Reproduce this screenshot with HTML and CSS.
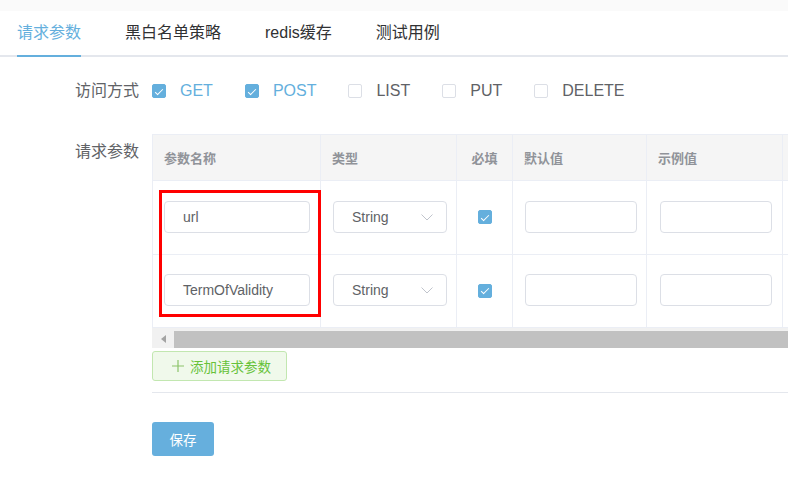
FILE: index.html
```html
<!DOCTYPE html>
<html lang="zh-CN">
<head>
<meta charset="utf-8">
<title>请求参数</title>
<link rel="stylesheet" href="styles.css">
</head>
<body>
<div class="topbar"></div>
<div class="tabs">
  <div class="tab active">请求参数</div>
  <div class="tab">黑白名单策略</div>
  <div class="tab">redis缓存</div>
  <div class="tab">测试用例</div>
</div>

<div class="form">
  <div class="form-row methods-row">
    <div class="label">访问方式</div>
    <div class="content checks">
      <label class="check on"><span class="box"></span><span class="txt">GET</span></label>
      <label class="check on"><span class="box"></span><span class="txt">POST</span></label>
      <label class="check"><span class="box"></span><span class="txt">LIST</span></label>
      <label class="check"><span class="box"></span><span class="txt">PUT</span></label>
      <label class="check"><span class="box"></span><span class="txt">DELETE</span></label>
    </div>
  </div>

  <div class="form-row params-row">
    <div class="label label-top">请求参数</div>
    <div class="content params">
      <div class="table">
        <div class="trow thead">
          <div class="cell c1">参数名称</div>
          <div class="cell c2">类型</div>
          <div class="cell c3 center">必填</div>
          <div class="cell c4">默认值</div>
          <div class="cell c5">示例值</div>
          <div class="cell c6"></div>
        </div>
        <div class="trow tbody r1">
          <div class="cell c1"><div class="input w146">url</div></div>
          <div class="cell c2"><div class="select">String<svg class="chev" width="12" height="7" viewBox="0 0 12 7"><path d="M0.5 0.5 L6 6 L11.5 0.5" fill="none" stroke="#c0c4cc" stroke-width="1"/></svg></div></div>
          <div class="cell c3 center"><span class="box on-box"></span></div>
          <div class="cell c4"><div class="input w111"></div></div>
          <div class="cell c5"><div class="input w111"></div></div>
          <div class="cell c6"></div>
        </div>
        <div class="trow tbody r2">
          <div class="cell c1"><div class="input w146">TermOfValidity</div></div>
          <div class="cell c2"><div class="select">String<svg class="chev" width="12" height="7" viewBox="0 0 12 7"><path d="M0.5 0.5 L6 6 L11.5 0.5" fill="none" stroke="#c0c4cc" stroke-width="1"/></svg></div></div>
          <div class="cell c3 center"><span class="box on-box"></span></div>
          <div class="cell c4"><div class="input w111"></div></div>
          <div class="cell c5"><div class="input w111"></div></div>
          <div class="cell c6"></div>
        </div>
        <div class="scrollbar">
          <div class="arrow"><svg width="6" height="8" viewBox="0 0 6 8"><path d="M5 0 L0 4 L5 8 Z" fill="#a3a3a3"/></svg></div>
          <div class="thumb"></div>
        </div>
        <div class="highlight"></div>
      </div>
      <div class="add-btn"><svg width="12" height="12" viewBox="0 0 12 12"><path d="M6 0 V12 M0 6 H12" stroke="#8cc46a" stroke-width="1.2"/></svg><span>添加请求参数</span></div>
      <div class="divider"></div>
      <div class="save-btn">保存</div>
    </div>
  </div>
</div>
</body>
</html>
```

FILE: styles.css
```css
* { box-sizing: border-box; }
html, body { margin: 0; padding: 0; background: #fff; }
body {
  font-family: "Liberation Sans", "Noto Sans CJK SC", sans-serif;
  color: #303133;
  width: 788px;
  overflow: hidden;
}
.topbar { height: 11px; background: #fafafa; }
.tabs {
  display: flex;
  gap: 44px;
  padding-left: 17px;
  height: 46px;
  border-bottom: 2px solid #e4e7ed;
}
.tab {
  font-size: 16px;
  line-height: 44px;
  height: 46px;
  color: #303133;
  border-bottom: 2px solid transparent;
}
.tab.active { color: #64afdd; border-bottom-color: #64afdd; }

.form { padding-top: 14px; }
.form-row { display: flex; }
.label {
  width: 139px;
  text-align: right;
  font-size: 16px;
  color: #606266;
  line-height: 40px;
  flex: none;
}
.label-top { line-height: 36px; }
.content { margin-left: 13px; flex: 1; min-width: 0; }
.methods-row { height: 40px; margin-bottom: 23px; }
.checks { display: flex; align-items: center; height: 40px; }
.check { display: flex; align-items: center; margin-right: 32px; }
.check .txt { font-size: 16px; color: #606266; margin-left: 14px; }
.check.on .txt { color: #64afdd; }
.box {
  display: inline-block;
  width: 14px; height: 14px;
  border: 1px solid #dcdfe6;
  border-radius: 2px;
  background: #fff;
  position: relative;
}
.check.on .box, .on-box { background: #64afdd; border-color: #64afdd; }
.check.on .box::after, .on-box::after {
  content: "";
  position: absolute;
  left: 4px; top: 1.5px;
  width: 3px; height: 7px;
  border: 1px solid #fff;
  border-left: 0; border-top: 0;
  transform: rotate(45deg);
}

.params { overflow: hidden; }
.table {
  position: relative;
  border-top: 1px solid #ebeef5;
  border-left: 1px solid #ebeef5;
  width: 760px;
}
.trow {
  display: grid;
  grid-template-columns: 168px 136px 56px 134px 136px 130px;
}
.cell {
  border-right: 1px solid #ebeef5;
  border-bottom: 1px solid #ebeef5;
  display: flex;
  align-items: center;
}
.thead .cell {
  height: 46px;
  background: #f5f5f5;
  font-size: 13px;
  font-weight: bold;
  color: #909399;
  padding-left: 11px;
}
.thead .c3 { padding-left: 0; }
.center { justify-content: center; }
.r1 .cell { height: 74px; padding-bottom: 2px; }
.r2 .cell { height: 73px; padding-bottom: 2px; }
.tbody .c1 { padding-left: 11px; }
.tbody .c2 { padding-left: 12px; }
.tbody .c3 { padding-top: 1px; }
.tbody .c4 { padding-left: 12px; }
.tbody .c5 { padding-left: 13px; }
.input, .select {
  height: 32px;
  border: 1px solid #dcdfe6;
  border-radius: 4px;
  background: #fff;
  font-size: 14px;
  color: #606266;
  display: flex;
  align-items: center;
  padding-left: 18px;
}
.w146 { width: 146px; }
.w111 { width: 112px; }
.select { width: 114px; position: relative; padding-left: 18px; }
.chev { position: absolute; right: 13px; top: 12px; }

.scrollbar {
  height: 20px;
  background: #f1f1f1;
  display: flex;
  align-items: center;
  margin-left: -1px;
}
.arrow { width: 22px; display: flex; justify-content: center; padding-top: 2px; padding-left: 2px; }
.thumb { flex: 1; height: 17px; background: #c1c1c1; margin-top: 2px; }

.highlight {
  position: absolute;
  left: 6px; top: 55px;
  width: 162px; height: 127px;
  border: 3px solid #ff0000;
}

.add-btn {
  margin-top: 3px;
  width: 135px; height: 30px;
  background: #f0f9eb;
  border: 1px solid #c2e7b0;
  border-radius: 3px;
  display: flex;
  align-items: center;
  padding-left: 19px;
  gap: 6px;
  color: #67c23a;
  font-size: 13.5px;
}
.divider { margin-top: 11px; height: 1px; background: #e4e7ed; }
.save-btn {
  margin-top: 29px;
  width: 62px; height: 34px;
  background: #66afdd;
  border-radius: 3px;
  color: #fff;
  font-size: 13.5px;
  display: flex;
  align-items: center;
  justify-content: center;
}
```
